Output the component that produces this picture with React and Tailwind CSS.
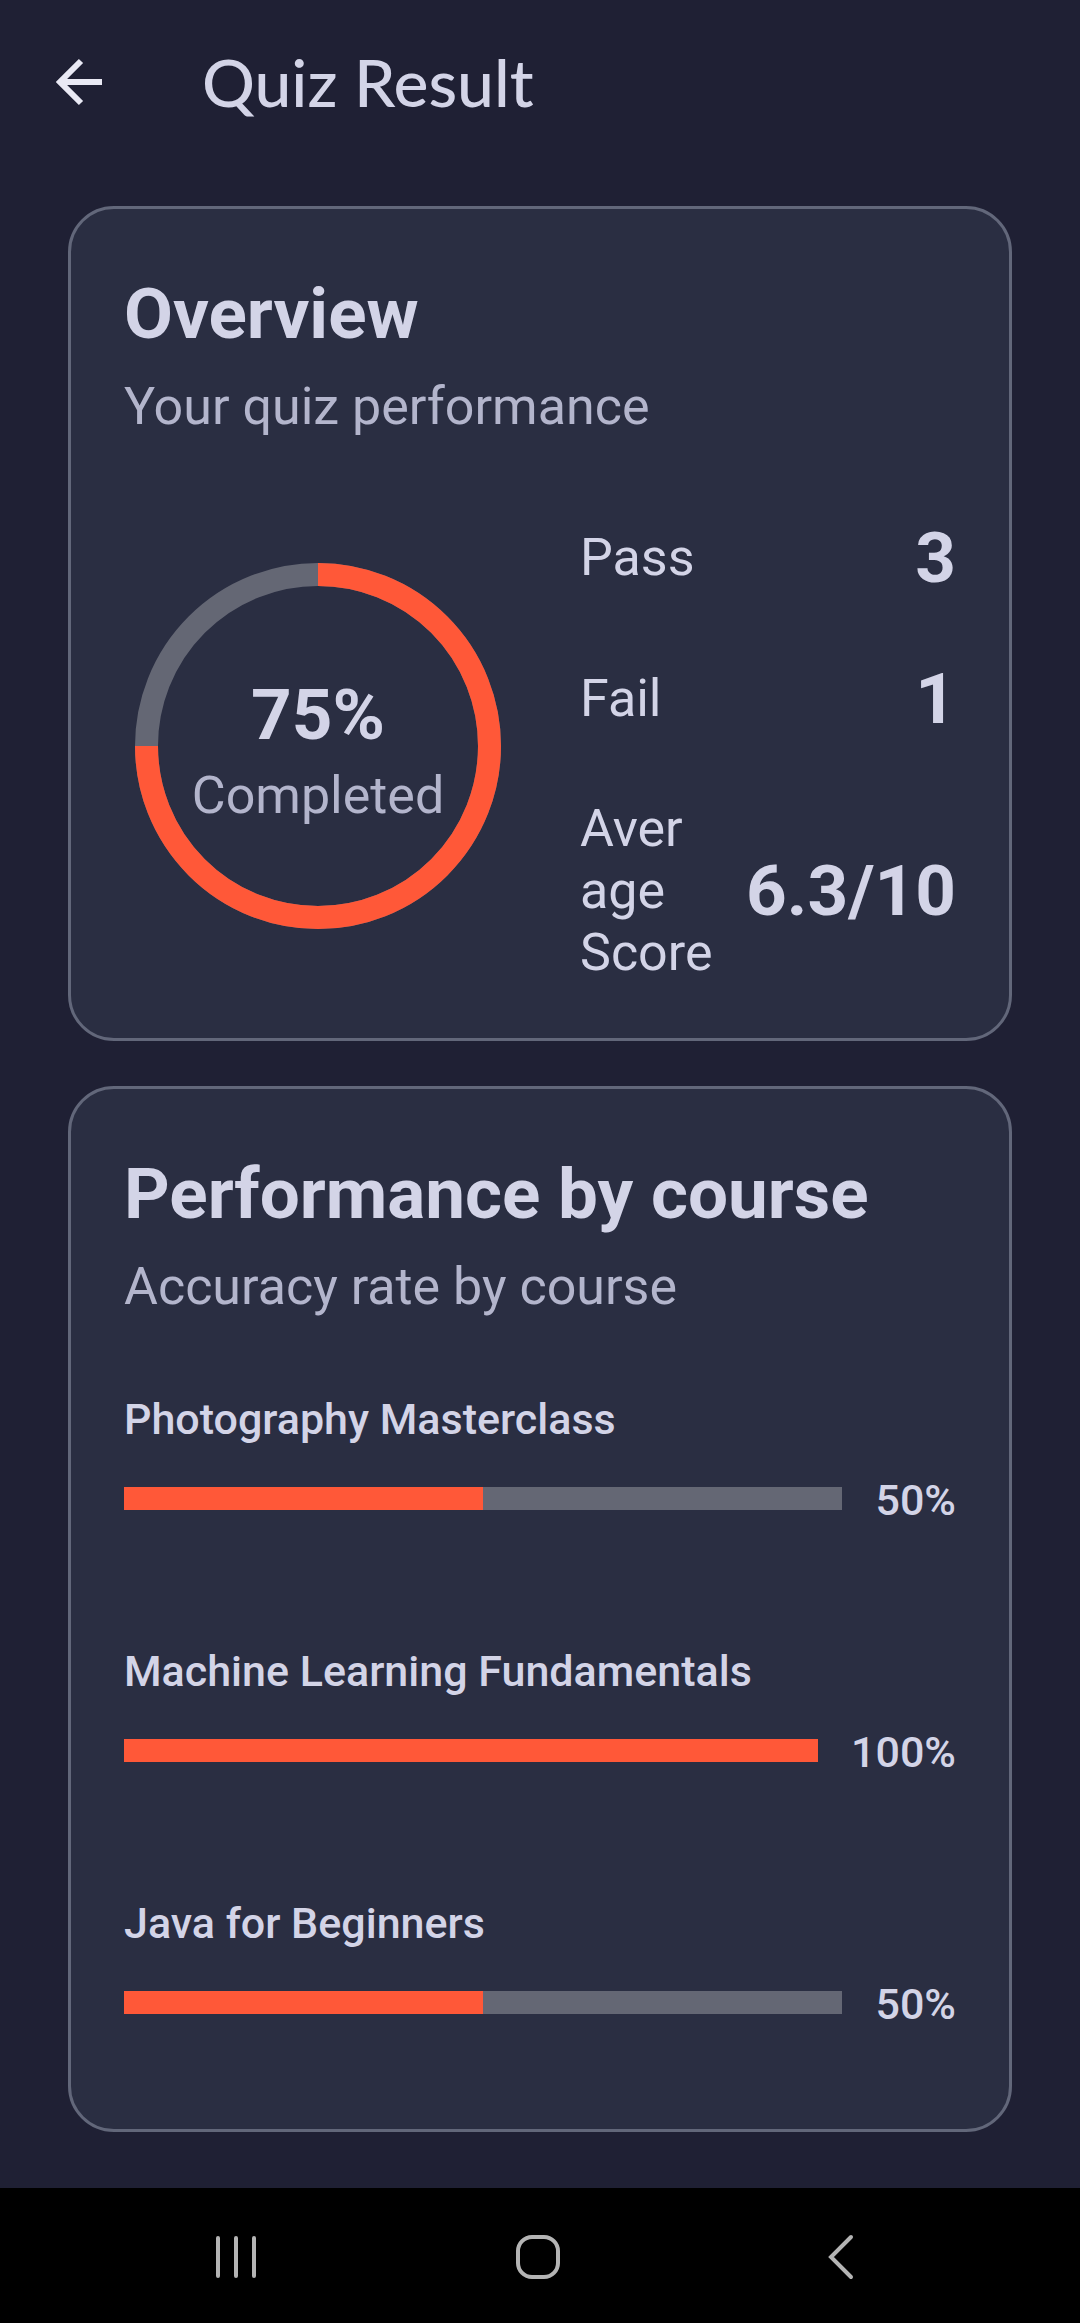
const courses = [
  { id: 'photography', name: 'Photography Masterclass', score: 50 },
  { id: 'ml', name: 'Machine Learning Fundamentals', score: 100 },
  { id: 'java', name: 'Java for Beginners', score: 50 },
];

function Card({ title, subtitle, className, children }) {
  return (
    <section className={`rounded-[46px] border-3 border-[#62677a] bg-[#2a2e42] px-[53px] pt-[63px] ${className}`}>
      <h2 className="text-[71px] leading-[84px] font-bold">{title}</h2>
      <p className="mt-5 text-[52px] leading-[62px] text-[#b3b5cc]">{subtitle}</p>
      {children}
    </section>
  );
}

function Ring({ percent }) {
  return (
    <div className="ml-[11px] grid shrink-0 place-items-center">
      <svg viewBox="0 0 366 366" className="col-start-1 row-start-1 mb-2 w-[366px]" aria-hidden="true">
        <circle cx="183" cy="183" r="171.5" fill="none" stroke="#646774" strokeWidth="23" />
        <circle
          cx="183"
          cy="183"
          r="171.5"
          fill="none"
          stroke="#ff5838"
          strokeWidth="23"
          pathLength="100"
          strokeDasharray={`${percent} 100`}
          transform="rotate(-90 183 183)"
        />
      </svg>
      <div className="col-start-1 row-start-1 flex flex-col items-center gap-2">
        <span className="text-[71px] leading-[84px] font-bold">{percent}%</span>
        <span className="text-[52px] leading-[62px] text-[#b3b5cc]">Completed</span>
      </div>
    </div>
  );
}

function Stat({ label, value }) {
  return (
    <div className="flex items-center justify-between">
      <dt className="text-[52px] leading-[62px]">{label}</dt>
      <dd className="text-[71px] leading-[84px] font-bold">{value}</dd>
    </div>
  );
}

function Course({ id, name, score }) {
  return (
    <li className="text-[43px] leading-[50px] font-medium">
      <h3 id={id}>{name}</h3>
      <div className="mt-[31px] flex items-center gap-[33px]">
        <div
          role="progressbar"
          aria-labelledby={id}
          aria-valuenow={score}
          className="mb-1 h-[23px] flex-1 bg-[#646774]"
        >
          <div className="h-full bg-[#ff5838]" style={{ width: `${score}%` }} />
        </div>
        <span>{score}%</span>
      </div>
    </li>
  );
}

export default function App() {
  return (
    <div className="flex min-h-screen flex-col bg-[#1f2034] font-[Roboto,sans-serif] text-[#d3d4e7]">
      <header className="flex h-[164px] items-center gap-[98px] px-[56px]">
        <button type="button" aria-label="Back">
          <svg viewBox="0 0 48 48" className="w-12" fill="none" stroke="#e9e9f4" strokeWidth="6" aria-hidden="true">
            <path d="M46 24H5M25 3 4 24l21 21" />
          </svg>
        </button>
        <h1 className="font-[Lato,sans-serif] text-[66px] leading-[84px] font-medium">Quiz Result</h1>
      </header>

      <main className="flex flex-1 flex-col gap-[45px] px-[68px] pt-[42px] pb-14">
        <Card title="Overview" subtitle="Your quiz performance" className="pb-[54px]">
          <div className="mt-[78px] flex items-center gap-[79px]">
            <Ring percent={75} />
            <dl className="flex flex-1 flex-col gap-[57px]">
              <Stat label="Pass" value="3" />
              <Stat label="Fail" value="1" />
              <Stat label={<>Aver<br />age<br />Score</>} value="6.3/10" />
            </dl>
          </div>
        </Card>

        <Card title="Performance by course" subtitle="Accuracy rate by course" className="pb-[100px]">
          <ul className="mt-[76px] flex flex-col gap-[121px]">
            {courses.map((course) => (
              <Course key={course.id} {...course} />
            ))}
          </ul>
        </Card>
      </main>

      <nav className="flex h-[135px] items-center justify-around bg-black pt-0.5 pr-[88px] pl-[84px]">
        <button type="button" aria-label="Recent apps">
          <svg viewBox="0 0 48 48" className="w-12" fill="none" stroke="#b4b4b4" strokeWidth="4" strokeLinecap="round" aria-hidden="true">
            <path d="M7 5v38M25 5v38M43 5v38" />
          </svg>
        </button>
        <button type="button" aria-label="Home">
          <svg viewBox="0 0 48 48" className="w-12" fill="none" stroke="#b4b4b4" strokeWidth="4" aria-hidden="true">
            <rect x="4" y="4" width="40" height="40" rx="14" />
          </svg>
        </button>
        <button type="button" aria-label="Back to previous screen">
          <svg viewBox="0 0 48 48" className="w-12" fill="none" stroke="#b4b4b4" strokeWidth="4" strokeLinecap="round" aria-hidden="true">
            <path d="M34 4 14 24l20 20" />
          </svg>
        </button>
      </nav>
    </div>
  );
}
